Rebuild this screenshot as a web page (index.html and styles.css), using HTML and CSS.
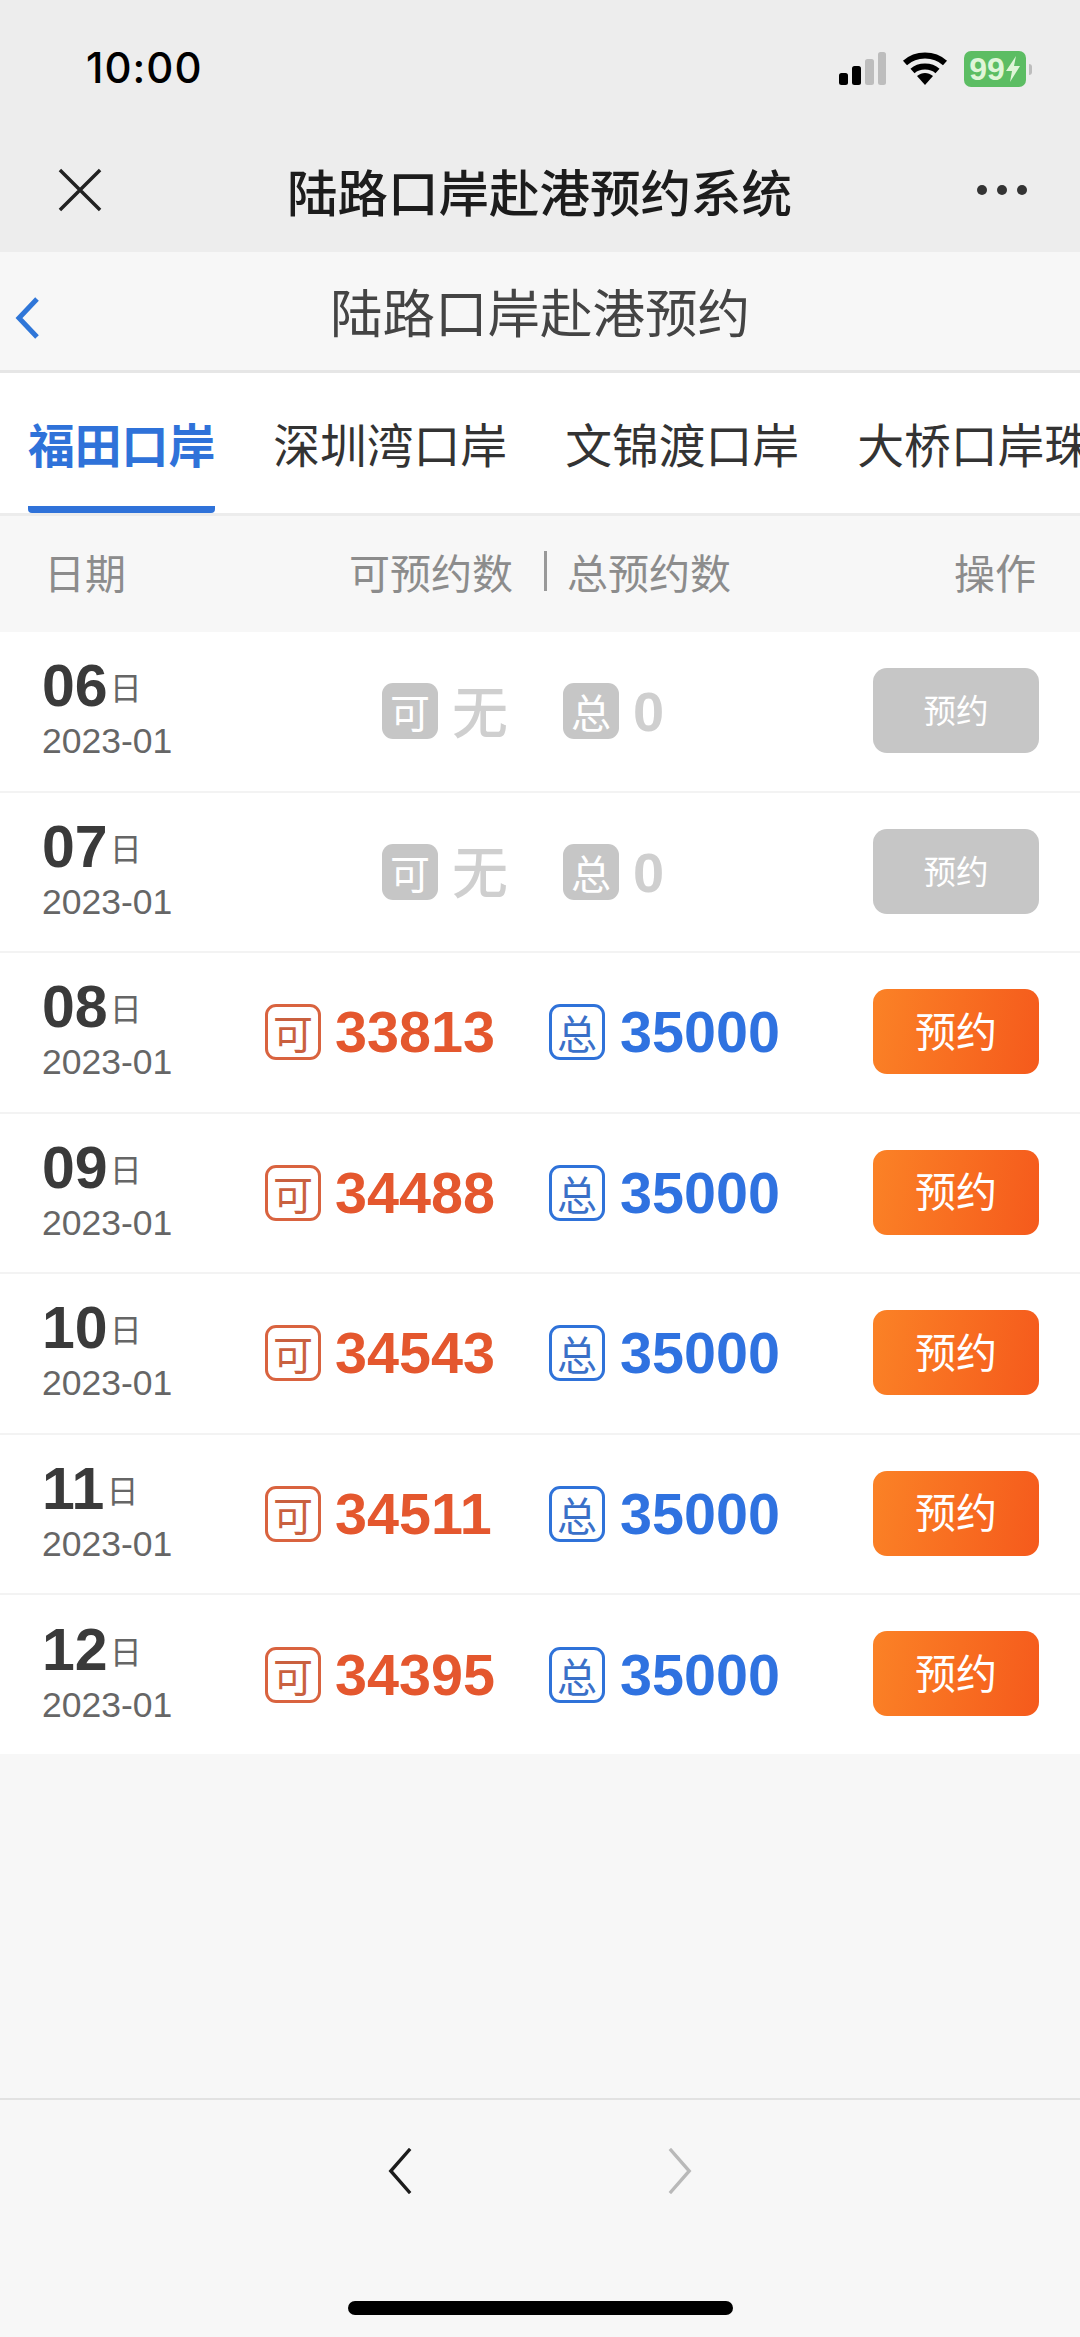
FILE: index.html
```html
<!DOCTYPE html>
<html lang="zh">
<head>
<meta charset="utf-8">
<title>陆路口岸赴港预约系统</title>
<link rel="stylesheet" href="styles.css">
</head>
<body>
<div class="app">
  <header class="top">
    <div class="status">
      <span class="time">10:00</span>
      <div class="status-icons">
        <svg class="signal" width="48" height="34" viewBox="0 0 48 34"><rect x="1" y="21" width="9" height="12" rx="2.5" fill="#000"/><rect x="14" y="14" width="9" height="19" rx="2.5" fill="#000"/><rect x="27" y="7" width="9" height="26" rx="2.5" fill="#bdbdbd"/><rect x="40" y="0" width="8" height="33" rx="2.5" fill="#bdbdbd"/></svg>
        <svg class="wifi" width="46" height="34" viewBox="0 0 46 34"><path d="M3 11 C14 1 32 1 43 11" fill="none" stroke="#000" stroke-width="6"/><path d="M10.5 19 C17 13 29 13 35.5 19" fill="none" stroke="#000" stroke-width="6"/><path d="M15 24 C20 20 26 20 31 24 L23 33 Z" fill="#000"/></svg>
        <div class="battery"><span class="battery-num">99</span><svg width="16" height="28" viewBox="0 0 16 28"><path d="M11 1 L1 16 H7 L5 27 L15 11 H9 Z" fill="#dff5d8"/></svg></div>
        <span class="battery-cap"></span>
      </div>
    </div>
    <div class="wx-bar">
      <svg class="wx-close" width="44" height="44" viewBox="0 0 46 46"><path d="M2 2 L44 44 M44 2 L2 44" stroke="#222" stroke-width="3.6" fill="none"/></svg>
      <h1 class="wx-title">陆路口岸赴港预约系统</h1>
      <div class="wx-more"><i></i><i></i><i></i></div>
    </div>
  </header>

  <div class="page-head">
    <svg class="back" width="26" height="42" viewBox="0 0 26 42"><path d="M23 2 L5 21 L23 40" stroke="#2f76d8" stroke-width="5" fill="none"/></svg>
    <h2 class="page-title">陆路口岸赴港预约</h2>
  </div>

  <nav class="tabs">
    <span class="tab active">福田口岸</span>
    <span class="tab">深圳湾口岸</span>
    <span class="tab">文锦渡口岸</span>
    <span class="tab">大桥口岸珠海</span>
  </nav>

  <div class="thead">
    <span class="th-date">日期</span>
    <span class="th-count"><span>可预约数</span><i class="th-sep"></i><span>总预约数</span></span>
    <span class="th-op">操作</span>
  </div>

  <main class="rows">
    <div class="row off">
      <div class="date"><div class="day"><b>06</b><span>日</span></div><div class="ym">2023-01</div></div>
      <div class="cell-a"><span class="tag">可</span><span class="val cjk">无</span></div>
      <div class="cell-b"><span class="tag">总</span><span class="val">0</span></div>
      <button class="btn">预约</button>
    </div>
    <div class="row off">
      <div class="date"><div class="day"><b>07</b><span>日</span></div><div class="ym">2023-01</div></div>
      <div class="cell-a"><span class="tag">可</span><span class="val cjk">无</span></div>
      <div class="cell-b"><span class="tag">总</span><span class="val">0</span></div>
      <button class="btn">预约</button>
    </div>
    <div class="row on">
      <div class="date"><div class="day"><b>08</b><span>日</span></div><div class="ym">2023-01</div></div>
      <div class="cell-a"><span class="tag">可</span><span class="val">33813</span></div>
      <div class="cell-b"><span class="tag">总</span><span class="val">35000</span></div>
      <button class="btn">预约</button>
    </div>
    <div class="row on">
      <div class="date"><div class="day"><b>09</b><span>日</span></div><div class="ym">2023-01</div></div>
      <div class="cell-a"><span class="tag">可</span><span class="val">34488</span></div>
      <div class="cell-b"><span class="tag">总</span><span class="val">35000</span></div>
      <button class="btn">预约</button>
    </div>
    <div class="row on">
      <div class="date"><div class="day"><b>10</b><span>日</span></div><div class="ym">2023-01</div></div>
      <div class="cell-a"><span class="tag">可</span><span class="val">34543</span></div>
      <div class="cell-b"><span class="tag">总</span><span class="val">35000</span></div>
      <button class="btn">预约</button>
    </div>
    <div class="row on">
      <div class="date"><div class="day"><b>11</b><span>日</span></div><div class="ym">2023-01</div></div>
      <div class="cell-a"><span class="tag">可</span><span class="val">34511</span></div>
      <div class="cell-b"><span class="tag">总</span><span class="val">35000</span></div>
      <button class="btn">预约</button>
    </div>
    <div class="row on">
      <div class="date"><div class="day"><b>12</b><span>日</span></div><div class="ym">2023-01</div></div>
      <div class="cell-a"><span class="tag">可</span><span class="val">34395</span></div>
      <div class="cell-b"><span class="tag">总</span><span class="val">35000</span></div>
      <button class="btn">预约</button>
    </div>
  </main>

  <footer class="bottom">
    <div class="nav-arrows">
      <svg width="24" height="46" viewBox="0 0 26 48" preserveAspectRatio="none"><path d="M24 1 L3 24 L24 47" stroke="#1c1c1c" stroke-width="3.6" fill="none"/></svg>
      <svg width="24" height="46" viewBox="0 0 26 48" preserveAspectRatio="none"><path d="M2 1 L23 24 L2 47" stroke="#b9b9b9" stroke-width="3.6" fill="none"/></svg>
    </div>
    <div class="home-bar"></div>
  </footer>
</div>
</body>
</html>
```

FILE: styles.css
```css
* { box-sizing: border-box; margin: 0; padding: 0; }
html, body { width: 1080px; height: 2337px; background: #f7f7f7; overflow: hidden; }
body { font-family: "Liberation Sans", "Noto Sans CJK SC", sans-serif; }
.app { width: 1080px; height: 2337px; display: flex; flex-direction: column; }

.top { height: 252px; background: #ededed; display: flex; flex-direction: column; }
.status { height: 134px; padding: 46px 48px 0 86px; display: flex; align-items: flex-start; justify-content: space-between; }
.time { font-family: "Inter", "Liberation Sans", sans-serif; font-size: 42px; line-height: 44px; font-weight: 500; color: #000; letter-spacing: 1px; }
.status-icons { display: flex; align-items: center; margin-top: 5px; }
.signal { margin-right: 16px; }
.wifi { margin-right: 16px; }
.battery { width: 62px; height: 36px; background: #5cbd63; border-radius: 7px; display: flex; align-items: center; justify-content: center; }
.battery-num { font-size: 32px; line-height: 36px; font-weight: 700; color: #dff5d8; }
.battery-cap { width: 3px; height: 11px; margin-left: 3px; background: #bdbdbd; border-radius: 0 3px 3px 0; }

.wx-bar { flex: 1; padding: 0 53px 6px 58px; display: flex; align-items: center; justify-content: space-between; }
.wx-close { width: 44px; height: 44px; }
.wx-title { font-family: "Noto Sans CJK SC", sans-serif; font-size: 50.5px; line-height: 60px; font-weight: 500; color: #1c1c1c; }
.wx-more { display: flex; gap: 10px; }
.wx-more i { width: 10px; height: 10px; border-radius: 50%; background: #333; }

.page-head { height: 121px; background: #f7f7f7; border-bottom: 3px solid #e6e6e6; position: relative; display: flex; align-items: center; justify-content: center; }
.back { position: absolute; left: 14px; top: 45px; width: 26px; height: 42px; }
.page-title { font-family: "Noto Sans CJK SC", sans-serif; font-size: 52.5px; line-height: 62px; font-weight: 400; color: #444; padding-bottom: 2px; }

.tabs { height: 143px; background: #fff; border-bottom: 3px solid #ececec; display: flex; gap: 58px; padding-left: 28px; overflow: hidden; white-space: nowrap; }
.tab { font-family: "Noto Sans CJK SC", sans-serif; font-size: 46.8px; line-height: 56px; padding-top: 42px; height: 140px; color: #333; flex: none; }
.tab.active { color: #2f72d9; font-weight: 700; border-bottom: 7px solid #2f72d9; border-radius: 4px; }

.thead { height: 116px; background: #f7f7f7; position: relative; font-family: "Noto Sans CJK SC", sans-serif; font-size: 41px; line-height: 50px; color: #8c8c8c; display: flex; align-items: center; padding: 0 44px 6px 44px; justify-content: space-between; }
.th-count { display: flex; align-items: center; position: absolute; left: 349px; }
.th-sep { width: 3px; height: 40px; background: #999; margin: 0 20px 0 31px; }

.rows { background: #fff; display: flex; flex-direction: column; }
.row { height: 160.5px; border-bottom: 2px solid #f3f3f3; display: flex; align-items: center; position: relative; }
.row:last-child { border-bottom: 0; height: 159px; }
.date { width: 265px; padding-left: 42px; }
.day { display: flex; align-items: center; height: 58px; line-height: 58px; color: #3a3a3a; margin-top: -3px; }
.day b { font-size: 59px; font-weight: 700; }
.day span { font-family: "Noto Sans CJK SC", sans-serif; font-size: 32px; color: #666; margin-left: 2px; }
.ym { font-size: 35.5px; line-height: 42px; color: #666; margin-top: 5px; }

.cell-a, .cell-b { display: flex; align-items: center; position: absolute; top: 0; height: 100%; }
.cell-a { left: 265px; }
.cell-b { left: 549px; }
.tag { width: 56px; height: 56px; border-radius: 11px; display: flex; align-items: center; justify-content: center; font-family: "Noto Sans CJK SC", sans-serif; font-size: 40px; line-height: 50px; font-weight: 400; }
.val { margin-left: 14px; font-size: 57.5px; line-height: 60px; font-weight: 700; }
.val.cjk { font-family: "Noto Sans CJK SC", sans-serif; font-weight: 500; padding-bottom: 5px; }

.btn { position: absolute; left: 873px; top: 36px; width: 166px; height: 85px; border: 0; border-radius: 14px; font-family: "Noto Sans CJK SC", sans-serif; font-size: 41px; color: #fff; padding-bottom: 6px; }

.off .tag { background: #c6c6c6; color: #fff; }
.off .val { color: #cfcfcf; }
.off .cell-a .tag { margin-left: 117px; }
.off .cell-a .val { font-size: 56px; }
.off .cell-b { left: 563px; }
.off .cell-b .val { font-size: 56px; padding-top: 2px; }
.off .btn { background: #c6c6c6; font-size: 32.5px; padding-bottom: 4px; }

.on .cell-a .tag { border: 3px solid #d9633f; color: #c9603f; }
.on .cell-b .tag { border: 3px solid #2f72d9; color: #3a70c8; }
.on .cell-a .val { color: #e4572e; }
.on .cell-b .val { color: #2f72e0; margin-left: 15px; }
.on .btn { background: linear-gradient(100deg, #fb8226, #f55a1c); }

.bottom { flex: 1; background: #f7f7f7; display: flex; flex-direction: column; justify-content: flex-end; align-items: center; }
.nav-arrows { width: 100%; height: 203px; border-top: 2px solid #e2e2e2; display: flex; justify-content: center; gap: 256px; padding-top: 48px; }
.home-bar { width: 385px; height: 14px; background: #000; border-radius: 8px; margin-bottom: 22px; }
```
